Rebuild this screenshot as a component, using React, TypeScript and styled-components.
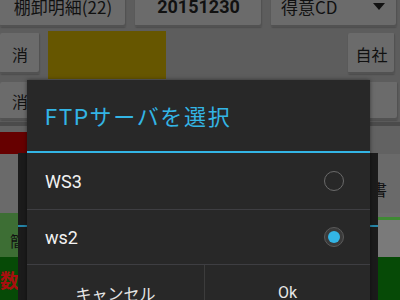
import React from "react";
import styled, { createGlobalStyle } from "styled-components";

const GlobalStyle = createGlobalStyle`
  html, body { margin: 0; padding: 0; background: #5d5d5d; }
  body {
    font-family: Roboto, "Noto Sans CJK JP", sans-serif;
    overflow: hidden;
  }
`;

const Screen = styled.div`
  position: relative;
  width: 400px;
  height: 300px;
  overflow: hidden;
  background: #5d5d5d;
`;

const Page = styled.div`
  display: flex;
  flex-direction: column;
`;

const TopRow = styled.div`
  display: grid;
  grid-template-columns: 126px 127px 126px;
  column-gap: 9px;
  margin-top: -14px;
  height: 41px;
`;

const AppButton = styled.div<{ $w?: number; $h?: number; $bold?: boolean; $size?: number }>`
  display: flex;
  align-items: center;
  justify-content: center;
  box-sizing: border-box;
  ${(p) => (p.$w ? `width: ${p.$w}px;` : "")}
  ${(p) => (p.$h ? `height: ${p.$h}px;` : "")}
  flex-shrink: 0;
  background: #6b6b6b;
  border-radius: 2px;
  box-shadow: inset -1px -2px 0 #525252, 0 1px 1px #4e4e4e;
  color: #111;
  font-size: ${(p) => p.$size ?? 17}px;
  font-weight: ${(p) => (p.$bold ? 700 : 400)};
  font-family: ${(p) =>
    p.$bold ? `Roboto, "Noto Sans CJK JP", sans-serif` : `"Noto Sans CJK JP", Roboto, sans-serif`};
  white-space: nowrap;
`;

const Spinner = styled(AppButton)`
  justify-content: space-between;
  padding: 0 12px 0 10px;
`;

const Row2 = styled.div`
  display: flex;
  align-items: flex-start;
  height: 49px;
  padding-top: 4px;
  gap: 8px;
`;

const Yellow = styled.div`
  width: 118px;
  height: 48px;
  background: #665600;
`;

const Spacer = styled.div`
  flex: 1;
`;

const Row3 = styled.div`
  display: flex;
  align-items: flex-start;
  height: 40px;
  padding-top: 2px;
  border-bottom: 4px solid #4b4b4b;
  padding-right: 2px;
`;

const Row4 = styled.div`
  display: flex;
  align-items: flex-end;
  height: 28px;
  background: #626262;
`;

const RedBar = styled.div`
  width: 220px;
  height: 22px;
  background: #660000;
`;

const PlainRow = styled.div<{ $h: number; $bg: string }>`
  position: relative;
  display: flex;
  height: ${(p) => p.$h}px;
  background: ${(p) => p.$bg};
`;

const SplitCell = styled.div<{ $bg: string; $w?: number; $topLine?: string }>`
  ${(p) => (p.$w ? `width: ${p.$w}px;` : "flex: 1;")}
  box-sizing: border-box;
  background: ${(p) => p.$bg};
  ${(p) => (p.$topLine ? `border-top: 3px solid ${p.$topLine}; margin-top: 4px;` : "")}
  display: flex;
  justify-content: flex-end;
`;

const CellText = styled.span<{ $color: string; $size: number; $pt: number; $mr?: number; $bold?: boolean }>`
  display: block;
  padding-top: ${(p) => p.$pt}px;
  margin-right: ${(p) => p.$mr ?? 0}px;
  color: ${(p) => p.$color};
  font-size: ${(p) => p.$size}px;
  font-weight: ${(p) => (p.$bold ? 700 : 400)};
  font-family: "Noto Sans CJK JP", sans-serif;
  line-height: 1;
`;

/* ---------- Dialogs (overlays) ---------- */

const BackDialog = styled.div`
  position: absolute;
  left: 18px;
  top: 153px;
  width: 360px;
  height: 160px;
  background: #1b1b1b;
  display: flex;
  flex-direction: column;
`;

const BackHeader = styled.div`
  height: 72px;
`;

const BackLine = styled.div`
  height: 2px;
  background: #2585a8;
`;

const FrontDialog = styled.div`
  position: absolute;
  left: 27px;
  top: 80px;
  width: 343px;
  height: 240px;
  background: #282828;
  display: flex;
  flex-direction: column;
  box-shadow: 0 0 4px rgba(0, 0, 0, 0.5);
`;

const Title = styled.div`
  height: 71px;
  box-sizing: border-box;
  display: flex;
  align-items: center;
  padding: 0 0 2px 18px;
  color: #33b5e5;
  font-size: 22px;
  font-family: Roboto, "Noto Sans CJK JP", sans-serif;
  letter-spacing: 1.7px;
`;

const BlueLine = styled.div`
  height: 2px;
  background: #33b5e5;
`;

const Item = styled.div<{ $h: number }>`
  height: ${(p) => p.$h}px;
  display: flex;
  align-items: center;
  justify-content: space-between;
  padding: 0 26px 0 18px;
  color: #f2f2f2;
  font-size: 18px;
`;

const Divider = styled.div`
  height: 1px;
  background: #3e3e42;
`;

const Radio = styled.div<{ $checked?: boolean }>`
  width: 20px;
  height: 20px;
  box-sizing: border-box;
  border-radius: 50%;
  display: flex;
  align-items: center;
  justify-content: center;
  border: ${(p) => (p.$checked ? "1.5px solid #5a5a5a" : "1.5px solid #6a6a6a")};
  background: ${(p) => (p.$checked ? "#3a3a3a" : "transparent")};
`;

const Dot = styled.div`
  width: 12px;
  height: 12px;
  border-radius: 50%;
  background: #33b5e5;
`;

const ButtonBar = styled.div`
  display: grid;
  grid-template-columns: 177px 1fr;
  flex: 1;
`;

const DialogButton = styled.div<{ $first?: boolean }>`
  display: flex;
  justify-content: center;
  padding-top: ${(p) => (p.$first ? 16 : 18)}px;
  color: #e6e6e6;
  font-size: 16px;
  font-family: Roboto, "Noto Sans CJK JP", sans-serif;
  ${(p) => (p.$first ? "" : "border-left: 1px solid #3c3c3c;")}
`;

const Caret = () => (
  <svg width="12" height="7" viewBox="0 0 12 7">
    <polygon points="0,0 12,0 6,7" fill="#111" />
  </svg>
);

export default function App() {
  return (
    <>
      <GlobalStyle />
      <Screen>
        <Page>
          <TopRow>
            <AppButton>棚卸明細(22)</AppButton>
            <AppButton $bold $size={18}>20151230</AppButton>
            <Spinner>
              <span>得意CD</span>
              <Caret />
            </Spinner>
          </TopRow>
          <Row2>
            <AppButton $w={40} $h={41} $size={16} style={{ marginTop: 2 }}>消</AppButton>
            <Yellow />
            <Spacer />
            <AppButton $w={47} $h={41} $size={16} style={{ marginTop: 2, marginRight: 5 }}>自社</AppButton>
          </Row2>
          <Row3>
            <AppButton $w={40} $h={38} $size={16}>消</AppButton>
            <Spacer />
            <AppButton $w={100} $h={38} $size={16}>自社</AppButton>
          </Row3>
          <Row4>
            <RedBar />
          </Row4>
          <PlainRow $h={59} $bg="#6a6a6a">
            <SplitCell $bg="#6a6a6a">
              <CellText $color="#111" $size={16} $pt={27} $mr={13}>書</CellText>
            </SplitCell>
          </PlainRow>
          <PlainRow $h={44} $bg="#6d6d6d">
            <SplitCell $bg="#3d6e34" $w={200}>
              <CellText $color="#111" $size={15} $pt={20} $mr={175}>簡</CellText>
            </SplitCell>
            <SplitCell $bg="#7a7a7a" $topLine="#3f8a34" />
          </PlainRow>
          <PlainRow $h={50} $bg="#064a06">
            <CellText $color="#a80f0f" $size={19} $pt={13} $bold>数</CellText>
          </PlainRow>
        </Page>

        <BackDialog>
          <BackHeader />
          <BackLine />
        </BackDialog>

        <FrontDialog>
          <Title>FTPサーバを選択</Title>
          <BlueLine />
          <Item $h={56}>
            <span>WS3</span>
            <Radio />
          </Item>
          <Divider />
          <Item $h={54}>
            <span>ws2</span>
            <Radio $checked>
              <Dot />
            </Radio>
          </Item>
          <Divider />
          <ButtonBar>
            <DialogButton $first>キャンセル</DialogButton>
            <DialogButton>Ok</DialogButton>
          </ButtonBar>
        </FrontDialog>
      </Screen>
    </>
  );
}
